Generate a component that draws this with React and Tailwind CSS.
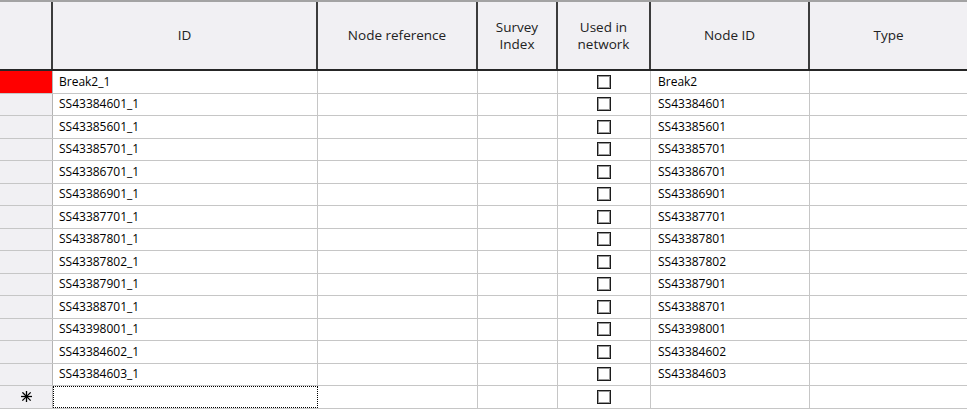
// App.jsx — node survey grid
const rows = [
  ['Break2_1', 'Break2'],
  ['SS43384601_1', 'SS43384601'],
  ['SS43385601_1', 'SS43385601'],
  ['SS43385701_1', 'SS43385701'],
  ['SS43386701_1', 'SS43386701'],
  ['SS43386901_1', 'SS43386901'],
  ['SS43387701_1', 'SS43387701'],
  ['SS43387801_1', 'SS43387801'],
  ['SS43387802_1', 'SS43387802'],
  ['SS43387901_1', 'SS43387901'],
  ['SS43388701_1', 'SS43388701'],
  ['SS43398001_1', 'SS43398001'],
  ['SS43384602_1', 'SS43384602'],
  ['SS43384603_1', 'SS43384603'],
];

const cols = 'grid grid-cols-[53px_265px_160px_80px_93px_159px_1fr]';

function Check() {
  return (
    <div className="w-[14px] h-[14px] border border-[#1c1c1c] bg-white shadow-[inset_0_0_0_1px_#9a9a9a]" />
  );
}

function Star() {
  return (
    <svg width="11" height="11" viewBox="0 0 11 11" className="text-black">
      <g stroke="currentColor" strokeWidth="1.3" strokeLinecap="square">
        <line x1="5.5" y1="0.5" x2="5.5" y2="10.5" />
        <line x1="0.5" y1="5.5" x2="10.5" y2="5.5" />
        <line x1="1.8" y1="1.8" x2="9.2" y2="9.2" />
        <line x1="9.2" y1="1.8" x2="1.8" y2="9.2" />
      </g>
    </svg>
  );
}

function HeaderCell({ children, last }) {
  return (
    <div
      className={
        'flex items-center justify-center text-center leading-[17px] text-[13.5px] text-[#222] ' +
        (last ? '' : 'border-r-2 border-[#3c3c3c]')
      }
    >
      {children}
    </div>
  );
}

function Row({ id, node, current, isNew }) {
  return (
    <div className={cols + ' h-[22.5px] border-b border-[#c6c6c6]'}>
      <div
        className={
          'flex items-center justify-center border-r border-[#b4b4b4] ' +
          (current ? 'bg-[#ff0000]' : 'bg-[#f1f0f3]')
        }
      >
        {isNew && <Star />}
      </div>
      <div
        className={
          'flex items-center pl-[6px] border-r border-[#c6c6c6] ' +
          (isNew ? 'border-dotted border border-black' : '')
        }
      >
        {id}
      </div>
      <div className="border-r border-[#c6c6c6]" />
      <div className="border-r border-[#c6c6c6]" />
      <div className="flex items-center justify-center border-r border-[#c6c6c6]">
        <Check />
      </div>
      <div className="flex items-center pl-[7px] border-r border-[#c6c6c6]">{node}</div>
      <div />
    </div>
  );
}

export default function App() {
  return (
    <div className="w-[967px] h-[409px] overflow-hidden bg-white font-['Open_Sans','Noto_Sans',sans-serif] text-[12px] text-[#000]">
      <div className={cols + ' h-[71px] bg-[#f1f0f3] border-t-2 border-[#a3a3a3] border-b-2 border-b-[#262626]'}>
        <HeaderCell />
        <HeaderCell>ID</HeaderCell>
        <HeaderCell>Node reference</HeaderCell>
        <HeaderCell>
          Survey
          <br />
          Index
        </HeaderCell>
        <HeaderCell>
          Used in
          <br />
          network
        </HeaderCell>
        <HeaderCell>Node ID</HeaderCell>
        <HeaderCell last>Type</HeaderCell>
      </div>
      {rows.map(([id, node], i) => (
        <Row key={id} id={id} node={node} current={i === 0} />
      ))}
      <Row id="" node="" isNew />
    </div>
  );
}
